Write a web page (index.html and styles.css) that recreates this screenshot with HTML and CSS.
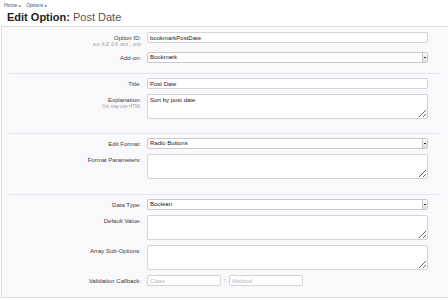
FILE: index.html
```html
<!DOCTYPE html>
<html lang="en">
<head>
    <meta charset="UTF-8">
    <meta name="viewport" content="width=device-width, initial-scale=1.0">
    <title>Edit Option: Post Date</title>
    <link rel="stylesheet" href="styles.css">
</head>
<body>
    <!-- Breadcrumb -->
    <div class="breadcrumb">
        <a href="#">Home</a> <span class="crumb-arrow">&#9656;</span>
        <a href="#">Options</a> <span class="crumb-arrow">&#9656;</span>
    </div>

    <h1 class="page-title"><span class="title-strong">Edit Option:</span> Post Date</h1>

    <form class="panel">
        <!-- Identity -->
        <fieldset class="group">
            <div class="row">
                <label class="label">Option ID:<span class="hint">a-z, A-Z, 0-9, and _ only</span></label>
                <input class="field" type="text" value="bookmarkPostDate">
            </div>
            <div class="row">
                <label class="label">Add-on:</label>
                <div class="select-wrap">
                    <select class="field select"><option>Bookmark</option></select>
                </div>
            </div>
        </fieldset>

        <!-- Title / Explanation -->
        <fieldset class="group">
            <div class="row">
                <label class="label">Title:</label>
                <input class="field" type="text" value="Post Date">
            </div>
            <div class="row">
                <label class="label">Explanation:<span class="hint">You may use HTML</span></label>
                <textarea class="field area">Sort by post date</textarea>
            </div>
        </fieldset>

        <!-- Format -->
        <fieldset class="group">
            <div class="row">
                <label class="label">Edit Format:</label>
                <div class="select-wrap">
                    <select class="field select"><option>Radio Buttons</option></select>
                </div>
            </div>
            <div class="row">
                <label class="label">Format Parameters:</label>
                <textarea class="field area"></textarea>
            </div>
        </fieldset>

        <!-- Data -->
        <fieldset class="group">
            <div class="row">
                <label class="label">Data Type:</label>
                <div class="select-wrap">
                    <select class="field select"><option>Boolean</option></select>
                </div>
            </div>
            <div class="row">
                <label class="label">Default Value:</label>
                <textarea class="field area"></textarea>
            </div>
            <div class="row">
                <label class="label">Array Sub-Options:</label>
                <textarea class="field area"></textarea>
            </div>
            <div class="row">
                <label class="label">Validation Callback:</label>
                <div class="callback">
                    <input class="field short" type="text" placeholder="Class">
                    <span class="sep">::</span>
                    <input class="field short" type="text" placeholder="Method">
                </div>
            </div>
        </fieldset>
    </form>
</body>
</html>
```

FILE: styles.css
```css
body {
    margin: 0;
    font-family: "Liberation Sans", Arial, sans-serif;
    background-color: #ffffff;
    color: #333;
    overflow: hidden;
}

/* Breadcrumb */
.breadcrumb {
    padding: 2px 0 0 4px;
    font-size: 5px;
    line-height: 7px;
}

.breadcrumb a {
    color: #2b5797;
    text-decoration: none;
}

.crumb-arrow {
    color: #2b5797;
    font-size: 4px;
    margin-right: 4px;
}

/* Page title */
.page-title {
    margin: 2px 0 0 7px;
    font-size: 11px;
    line-height: 13px;
    font-weight: normal;
    color: #555;
}

.title-strong {
    font-weight: bold;
    color: #1e1e1e;
}

/* Form panel */
.panel {
    margin: 2px 0 0 1px;
    width: calc(100% - 1px);
    height: 272px;
    background-color: #f9f9fb;
    border: 1px solid #dcdde2;
    border-right: none;
    box-sizing: border-box;
    overflow: hidden;
}

.group {
    margin: 0 0 0 7px;
    min-width: 0;
    width: 430px;
    padding: 4px 0 14px;
    border: none;
    border-top: 1px solid #e6e7eb;
    display: flex;
    flex-direction: column;
    gap: 5px;
    box-sizing: border-box;
}

.group:first-child {
    border-top-color: transparent;
    padding-bottom: 10px;
}

.group:nth-child(3) {
    padding-bottom: 15px;
}

.row {
    display: grid;
    grid-template-columns: 132px 281px;
    column-gap: 6px;
    align-items: start;
}

.label {
    text-align: right;
    font-size: 6px;
    line-height: 8px;
    padding-top: 2px;
    color: #3a3a3a;
}

.hint {
    display: block;
    font-size: 4.5px;
    line-height: 5px;
    color: #9a9a9a;
    font-style: italic;
}

/* Inputs */
.field {
    display: block;
    box-sizing: border-box;
    height: 11px;
    width: 100%;
    margin: 0;
    padding: 0 2px;
    font-family: "Liberation Sans", Arial, sans-serif;
    font-size: 6px;
    line-height: 9px;
    color: #222;
    background-color: #fff;
    border: 1px solid #d2d3d7;
    border-radius: 2px;
    outline: none;
}

.field::placeholder {
    color: #b5b5b5;
    font-style: italic;
}

.area {
    height: 25px;
    padding: 2px;
    line-height: 7px;
    resize: vertical;
}

.select-wrap {
    position: relative;
    height: 11px;
}

.select {
    appearance: none;
    -webkit-appearance: none;
    border-color: #c9cacf;
}

/* little stepper box on the right of each select */
.select-wrap::after {
    content: "";
    position: absolute;
    right: 1px;
    top: 1px;
    width: 4px;
    height: 9px;
    background: linear-gradient(#fdfdfd, #dcdcdc);
    border-left: 1px solid #c4c4c4;
}

.select-wrap::before {
    content: "";
    position: absolute;
    right: 2px;
    top: 5px;
    width: 2px;
    height: 1px;
    background: #333;
    z-index: 1;
}

.callback {
    display: flex;
    align-items: center;
}

.short {
    width: 74px;
}

.sep {
    width: 8px;
    text-align: center;
    font-size: 5px;
    line-height: 11px;
    color: #444;
}
```
